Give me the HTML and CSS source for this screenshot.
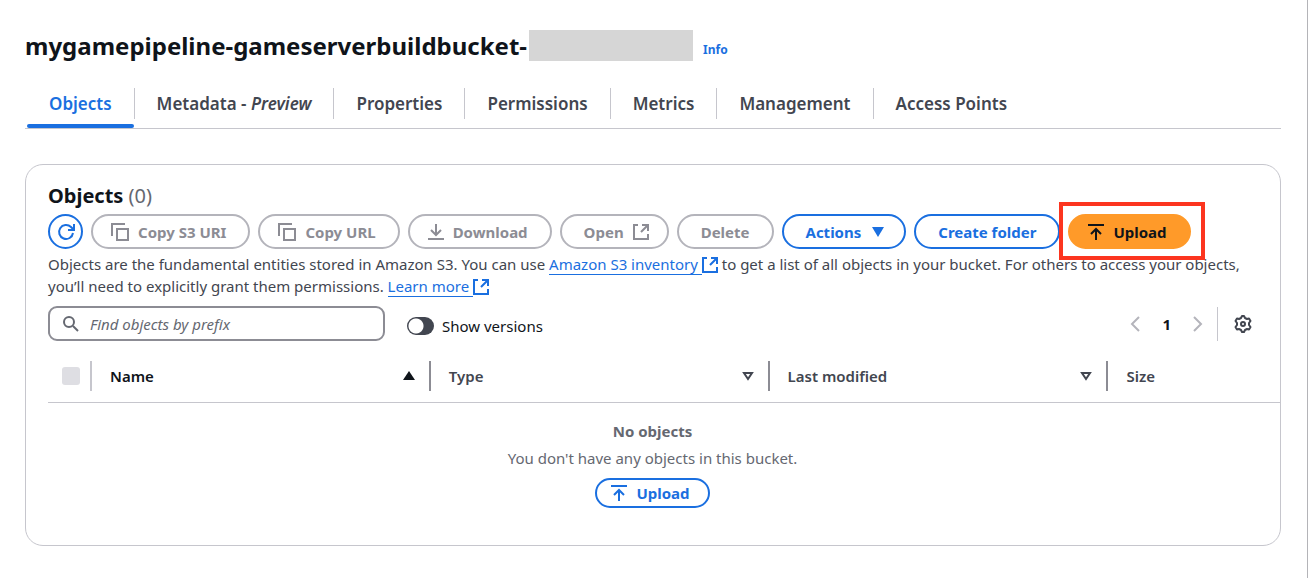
FILE: index.html
```html
<!DOCTYPE html>
<html lang="en">
<head>
    <meta charset="UTF-8">
    <meta name="viewport" content="width=device-width, initial-scale=1.0">
    <title>S3 bucket - Objects</title>
    <link rel="stylesheet" href="styles.css">
</head>
<body>
    <!-- Shared icons -->
    <svg class="sprite" aria-hidden="true">
        <symbol id="icon-copy" viewBox="0 0 18 18">
            <path d="M1 13V1h13M6 6h11v11H6z"/>
        </symbol>
        <symbol id="icon-external" viewBox="0 0 16 16">
            <path d="M5 1H1v14h14v-5M9 1h6v6M15 1L8 8"/>
        </symbol>
        <symbol id="icon-upload" viewBox="0 0 16 16">
            <path d="M0 1h16M8 16V6M3 10l5-5 5 5"/>
        </symbol>
        <symbol id="icon-sort" viewBox="0 0 12 10">
            <path d="M2 2h8L6 8z"/>
        </symbol>
    </svg>

    <header class="page-header">
        <h1>mygamepipeline-gameserverbuildbucket-</h1>
        <span class="account-id"></span>
        <a href="#" class="info">Info</a>
    </header>

    <nav class="tabs">
        <a href="#" class="active">Objects</a>
        <a href="#">Metadata - <em>Preview</em></a>
        <a href="#">Properties</a>
        <a href="#">Permissions</a>
        <a href="#">Metrics</a>
        <a href="#">Management</a>
        <a href="#">Access Points</a>
    </nav>

    <main class="card">
        <h2>Objects <span class="counter">(0)</span></h2>

        <div class="actions">
            <button type="button" class="btn round" aria-label="Refresh">
                <svg class="icon large" viewBox="0 0 18 18"><path d="M16 10a7 7 0 1 1-2-6l3 3M17 1v6h-6"/></svg>
            </button>
            <button type="button" class="btn" disabled><svg class="icon large"><use href="#icon-copy"/></svg>Copy S3 URI</button>
            <button type="button" class="btn" disabled><svg class="icon large"><use href="#icon-copy"/></svg>Copy URL</button>
            <button type="button" class="btn" disabled><svg class="icon" viewBox="0 0 16 16"><path d="M8 0v11M3 6l5 5 5-5M0 15h16"/></svg>Download</button>
            <button type="button" class="btn" disabled>Open<svg class="icon"><use href="#icon-external"/></svg></button>
            <button type="button" class="btn" disabled>Delete</button>
            <button type="button" class="btn">Actions<svg class="caret" viewBox="0 0 12 10"><path d="M0 0h12L6 10z"/></svg></button>
            <button type="button" class="btn">Create folder</button>
            <div class="highlight">
                <button type="button" class="btn primary"><svg class="icon"><use href="#icon-upload"/></svg>Upload</button>
            </div>
        </div>

        <p class="description">
            Objects are the fundamental entities stored in Amazon S3. You can use
            <a href="#"><span>Amazon S3 inventory&nbsp;</span><svg class="icon"><use href="#icon-external"/></svg></a>
            to get a list of all objects in your bucket. For others to access your objects, you’ll need to explicitly grant them permissions.
            <a href="#"><span>Learn more&nbsp;</span><svg class="icon"><use href="#icon-external"/></svg></a>
        </p>

        <div class="filters">
            <label class="search">
                <svg class="icon" viewBox="0 0 16 16"><circle cx="6" cy="6" r="5"/><path d="M10 10l5 5"/></svg>
                <input type="text" placeholder="Find objects by prefix" aria-label="Find objects by prefix">
            </label>
            <label class="toggle">
                <input type="checkbox">
                Show versions
            </label>
            <div class="pagination">
                <button type="button" aria-label="Previous page" disabled><svg viewBox="0 0 10 16"><path d="M9 1L2 8l7 7"/></svg></button>
                <button type="button" class="current">1</button>
                <button type="button" aria-label="Next page" disabled><svg viewBox="0 0 10 16"><path d="M1 1l7 7-7 7"/></svg></button>
            </div>
            <button type="button" class="settings" aria-label="Preferences">
                <svg viewBox="0 0 18 18"><path d="M7 3l1-2h2l1 2 2 1 2-.5 1.500 2.500-1.500 2v2l1.500 2-1.500 2.500-2-.5-2 1-1 2H8l-1-2-2-1-2 .5L1.500 12 3 10V8L1.500 6 3 3.500 5 4z"/><circle cx="9" cy="9" r="2"/></svg>
            </button>
        </div>

        <table>
            <colgroup>
                <col class="col-select">
                <col class="col-data">
                <col class="col-data">
                <col class="col-data">
                <col>
            </colgroup>
            <thead>
                <tr>
                    <th><input type="checkbox" aria-label="Select all" disabled></th>
                    <th class="sorted"><div class="cell">Name<svg viewBox="0 0 12 10"><path d="M6 0l6 9H0z"/></svg></div></th>
                    <th><div class="cell">Type<svg><use href="#icon-sort"/></svg></div></th>
                    <th><div class="cell">Last modified<svg><use href="#icon-sort"/></svg></div></th>
                    <th><div class="cell">Size</div></th>
                </tr>
            </thead>
            <tbody>
                <tr>
                    <td colspan="5" class="empty">
                        <b>No objects</b>
                        <p>You don't have any objects in this bucket.</p>
                        <button type="button" class="btn small"><svg class="icon"><use href="#icon-upload"/></svg>Upload</button>
                    </td>
                </tr>
            </tbody>
        </table>
    </main>
</body>
</html>
```
FILE: styles.css
```css
* {
    box-sizing: border-box;
}

body {
    margin: 0;
    min-height: 100vh;
    padding: 28px 26px 32px 25px;
    border-right: 1px solid #b4b4b8;
    background: #fff;
    color: #0f141a;
    font-family: "Noto Sans", "Open Sans", sans-serif;
    font-size: 15px;
    line-height: 22px;
}

a {
    color: #1a6fe0;
    text-decoration: none;
}

button {
    font: inherit;
    cursor: pointer;
}

.sprite {
    display: none;
}

.icon {
    flex: none;
    width: 16px;
    height: 16px;
    fill: none;
    stroke: currentColor;
    stroke-width: 2;
}

.icon.large {
    width: 18px;
    height: 18px;
}

/* Header */
.page-header {
    display: flex;
    align-items: center;
    height: 35px;
}

.page-header h1 {
    margin: 0;
    font-size: 24px;
    line-height: 35px;
    font-weight: 700;
}

.account-id {
    width: 164px;
    height: 31px;
    margin: 0 10px 0 2px;
    background: #d6d6d6;
}

.info {
    padding-top: 8px;
    font-size: 12px;
    font-weight: 700;
}

/* Tabs */
.tabs {
    display: flex;
    padding: 25px 0 9px 2px;
    border-bottom: 1px solid #c6c6cd;
}

.tabs a {
    position: relative;
    padding: 0 22px;
    border-right: 1px solid #c6c6cd;
    color: #424650;
    font-size: 17px;
    line-height: 31px;
    font-weight: 600;
}

.tabs a:last-child {
    border-right: none;
}

.tabs .active {
    color: #1a6fe0;
}

.tabs .active::after {
    content: "";
    position: absolute;
    left: 0;
    right: 0;
    bottom: -9px;
    height: 4px;
    border-radius: 2px;
    background: #1a6fe0;
}

/* Objects card */
.card {
    margin-top: 35px;
    padding: 17px 0 37px 22px;
    border: 1px solid #c6c6cd;
    border-radius: 18px;
}

.card h2 {
    margin: 0;
    font-size: 20px;
    line-height: 28px;
    font-weight: 700;
}

.counter {
    color: #656871;
    font-weight: 400;
}

.actions {
    display: flex;
    gap: 8px;
    padding-top: 4px;
}

.btn {
    display: inline-flex;
    align-items: center;
    justify-content: center;
    gap: 13px;
    height: 35px;
    padding: 0 22px;
    border: 2px solid #1a6fe0;
    border-radius: 18px;
    background: #fff;
    color: #1a6fe0;
    font-weight: 700;
    white-space: nowrap;
}

.btn .icon {
    margin: 0 -4px;
}

.btn:disabled {
    border-color: #b4b4bb;
    color: #8c8c94;
    cursor: default;
}

.btn.round {
    width: 35px;
    padding: 0;
}

.btn.primary {
    border-color: #ff9a29;
    background: #ff9a29;
    color: #0f141a;
}

.btn.small {
    height: 30px;
    padding: 0 18px;
}

.caret {
    width: 12px;
    height: 10px;
    margin: 0 -2px;
    fill: currentColor;
}

.highlight {
    position: relative;
}

.highlight::after {
    content: "";
    position: absolute;
    inset: -12px -14px -11px -9px;
    border: 4px solid #fc351f;
    pointer-events: none;
}

.description {
    margin: 4px 40px 0 0;
    color: #424650;
}

.description span {
    border-bottom: 1px solid #1a6fe0;
}

.description .icon {
    vertical-align: -3px;
}

/* Filter row */
.filters {
    display: flex;
    align-items: center;
    margin-top: 9px;
    padding-right: 23px;
}

.search {
    display: flex;
    align-items: center;
    gap: 11px;
    width: 337px;
    height: 35px;
    padding: 0 13px;
    border: 2px solid #8c8c94;
    border-radius: 9px;
    color: #656871;
}

.search input {
    flex: 1;
    min-width: 0;
    padding: 0;
    border: none;
    outline: none;
    background: none;
    font: inherit;
}

.search input::placeholder {
    color: #656871;
    font-style: italic;
    opacity: 1;
}

.toggle {
    display: flex;
    align-items: center;
    gap: 8px;
    margin-left: 22px;
    padding-top: 5px;
}

.toggle input {
    appearance: none;
    width: 27px;
    height: 18px;
    margin: 0;
    border-radius: 9px;
    background: radial-gradient(circle at 9px 9px, #fff 7px, #424650 8px);
}

.pagination {
    display: flex;
    align-items: center;
    gap: 22px;
    margin-left: auto;
    padding-right: 14px;
    border-right: 1px solid #c6c6cd;
    height: 34px;
}

.pagination button,
.settings {
    display: flex;
    padding: 0;
    border: none;
    background: none;
    color: #b4b4bb;
}

.pagination svg {
    width: 10px;
    height: 16px;
    fill: none;
    stroke: currentColor;
    stroke-width: 2;
}

.pagination .current {
    color: #0f141a;
    font-weight: 700;
}

.settings {
    margin: 0 5px 0 16px;
    color: #424650;
}

.settings svg {
    width: 18px;
    height: 18px;
    fill: none;
    stroke: currentColor;
    stroke-width: 2;
    stroke-linejoin: round;
}

/* Table */
table {
    width: 100%;
    margin-top: 12px;
    border-collapse: collapse;
    table-layout: fixed;
}

.col-select {
    width: 42px;
}

.col-data {
    width: 27.5%;
}

th {
    padding: 8px 0 11px;
    border-bottom: 1px solid #c6c6cd;
    color: #424650;
    font-weight: 600;
    text-align: left;
}

th input {
    appearance: none;
    display: block;
    width: 18px;
    height: 18px;
    margin: 0 0 0 14px;
    border-radius: 3px;
    background: #dedee3;
}

.cell {
    display: flex;
    align-items: center;
    justify-content: space-between;
    padding: 0 14px 0 18px;
    border-left: 2px solid #8c8c94;
    line-height: 30px;
}

.sorted .cell {
    border-color: #c6c6cd;
}

.cell svg {
    width: 12px;
    height: 10px;
    fill: none;
    stroke: currentColor;
    stroke-width: 2;
}

th.sorted {
    color: #0f141a;
}

.sorted svg {
    fill: currentColor;
    stroke: none;
}

.empty {
    padding: 17px 23px 0 0;
    color: #656871;
    text-align: center;
}

.empty p {
    margin: 5px 0 9px;
}
```
